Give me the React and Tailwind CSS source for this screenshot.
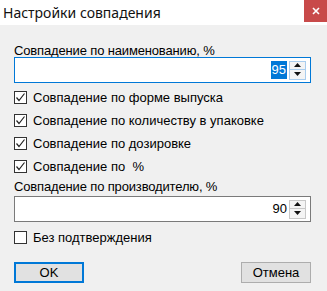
import { useState } from 'react'

function CheckBox({ checked }) {
    return (
        <span className="flex h-[13px] w-[13px] items-center justify-center border border-[#333333] bg-white">
            {checked && (
                <svg width="11" height="11" viewBox="0 0 11 11" fill="none">
                    <path d="M1.5 5.5L4 8.5L9.5 1.5" stroke="#222222" strokeWidth="1.2" />
                </svg>
            )}
        </span>
    )
}

function Spinner({ focused }) {
    const border = focused ? 'border-[#a9cdee]' : 'border-[#c8c8c8]'
    return (
        <div className="ml-[2px] flex h-[19px] w-[17px] flex-col">
            <div className={`flex h-1/2 items-center justify-center border ${border} bg-[#f4f4f4]`}>
                <svg width="7" height="4" viewBox="0 0 7 4">
                    <path d="M3.5 0L7 4H0z" fill="#111111" />
                </svg>
            </div>
            <div className={`flex h-1/2 items-center justify-center border border-t-0 ${border} bg-[#f4f4f4]`}>
                <svg width="7" height="4" viewBox="0 0 7 4">
                    <path d="M0 0H7L3.5 4z" fill="#111111" />
                </svg>
            </div>
        </div>
    )
}

function NumberField({ value, focused }) {
    return (
        <div
            className={`flex h-[26px] items-center justify-end border bg-white pr-[4px] ${focused ? 'border-[#0078d7]' : 'border-[#7a7a7a]'}`}
        >
            {focused ? (
                <span className="h-[18px] bg-[#0078d7] px-[1px] leading-[18px] text-white">{value}</span>
            ) : (
                <span className="leading-[18px] text-black">{value}</span>
            )}
            <Spinner focused={focused} />
        </div>
    )
}

function CheckRow({ checked, label, className = '' }) {
    return (
        <label className={`flex h-[23px] items-center gap-[6px] ${className}`}>
            <CheckBox checked={checked} />
            <span className="whitespace-pre leading-[13px] text-black">{label}</span>
        </label>
    )
}

export default function App() {
    const [opts] = useState([
        { label: 'Совпадение по форме выпуска', checked: true },
        { label: 'Совпадение по количеству в упаковке', checked: true },
        { label: 'Совпадение по дозировке', checked: true },
        { label: 'Совпадение по  %', checked: true },
    ])

    return (
        <div className="flex h-[291px] w-[327px] flex-col overflow-hidden bg-[#f0f0f0]">
            <div className="flex h-[25px] items-start justify-between bg-white">
                <span className="pl-[3px] pt-[3px] text-[14px] leading-[19px] text-[#111111] [font-family:'Noto_Sans','Open_Sans',sans-serif]">
                    Настройки совпадения
                </span>
                <div className="flex h-[22px] w-[23px] items-center justify-center bg-[#c84a4a]">
                    <svg width="8" height="8" viewBox="0 0 8 8">
                        <path d="M1 1L7 7M7 1L1 7" stroke="white" strokeWidth="1.6" />
                    </svg>
                </div>
            </div>

            <div className="flex flex-col pl-[14px] pr-[16px] pt-[19px] text-[13px] [font-family:'Liberation_Sans',Arial,sans-serif]">
                <div className="h-[13px] leading-[13px] tracking-[-0.15px] text-black">Совпадение по наименованию, %</div>
                <NumberField value="95" focused />

                <div className="mt-[3px] flex flex-col">
                    {opts.map((o) => (
                        <CheckRow key={o.label} checked={o.checked} label={o.label} />
                    ))}
                </div>

                <div className="flex h-[18px] items-center tracking-[-0.15px] text-black">Совпадение по производителю, %</div>
                <NumberField value="90" />

                <CheckRow className="mt-[4px]" checked={false} label="Без подтверждения" />

                <div className="mt-[13px] flex items-center justify-between">
                    <button className="flex h-[21px] w-[70px] items-center justify-center border-2 border-[#0078d7] bg-[#e1e1e1] text-black">
                        OK
                    </button>
                    <button className="flex h-[21px] w-[70px] items-center justify-center border border-[#adadad] bg-[#e1e1e1] text-black">
                        Отмена
                    </button>
                </div>
            </div>
        </div>
    )
}
